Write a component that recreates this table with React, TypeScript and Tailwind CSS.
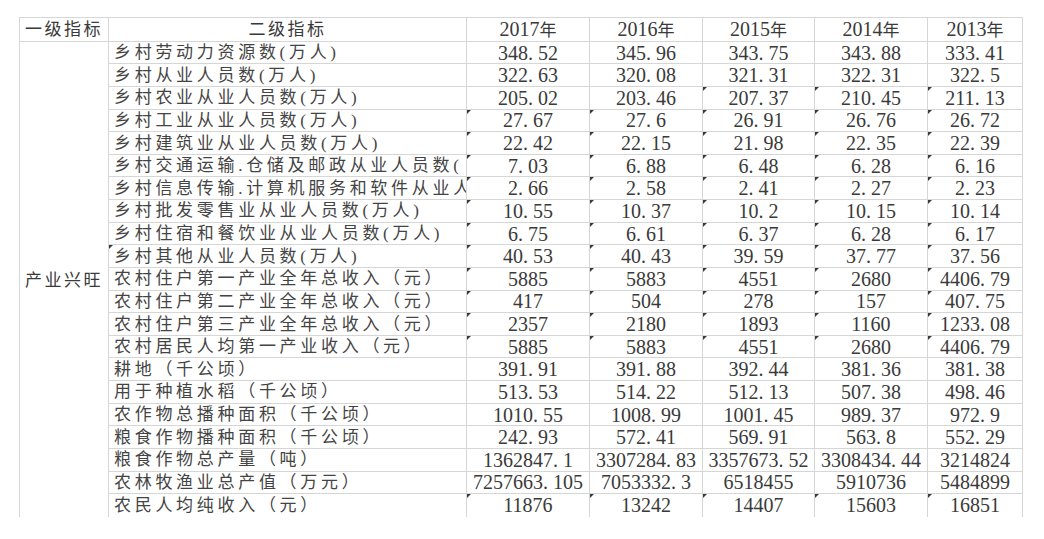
import React from 'react';

type Row = {
  label: string;
  values: string[];
  flags: boolean[]; // little corner marks on the year cells
  labelFlag?: boolean;
};

const ALL = [true, true, true, true, true];
const NONE = [false, false, false, false, false];

const rows: Row[] = [
  { label: '乡村劳动力资源数(万人)', values: ['348.52', '345.96', '343.75', '343.88', '333.41'], flags: NONE },
  { label: '乡村从业人员数(万人)', values: ['322.63', '320.08', '321.31', '322.31', '322.5'], flags: NONE },
  { label: '乡村农业从业人员数(万人)', values: ['205.02', '203.46', '207.37', '210.45', '211.13'], flags: [false, false, true, true, true] },
  { label: '乡村工业从业人员数(万人)', values: ['27.67', '27.6', '26.91', '26.76', '26.72'], flags: ALL },
  { label: '乡村建筑业从业人员数(万人)', values: ['22.42', '22.15', '21.98', '22.35', '22.39'], flags: ALL },
  { label: '乡村交通运输.仓储及邮政从业人员数(', values: ['7.03', '6.88', '6.48', '6.28', '6.16'], flags: ALL },
  { label: '乡村信息传输.计算机服务和软件从业人', values: ['2.66', '2.58', '2.41', '2.27', '2.23'], flags: ALL },
  { label: '乡村批发零售业从业人员数(万人)', values: ['10.55', '10.37', '10.2', '10.15', '10.14'], flags: ALL },
  { label: '乡村住宿和餐饮业从业人员数(万人)', values: ['6.75', '6.61', '6.37', '6.28', '6.17'], flags: ALL },
  { label: '乡村其他从业人员数(万人)', values: ['40.53', '40.43', '39.59', '37.77', '37.56'], flags: ALL, labelFlag: true },
  { label: '农村住户第一产业全年总收入（元）', values: ['5885', '5883', '4551', '2680', '4406.79'], flags: ALL },
  { label: '农村住户第二产业全年总收入（元）', values: ['417', '504', '278', '157', '407.75'], flags: ALL },
  { label: '农村住户第三产业全年总收入（元）', values: ['2357', '2180', '1893', '1160', '1233.08'], flags: ALL },
  { label: '农村居民人均第一产业收入（元）', values: ['5885', '5883', '4551', '2680', '4406.79'], flags: ALL },
  { label: '耕地（千公顷）', values: ['391.91', '391.88', '392.44', '381.36', '381.38'], flags: NONE },
  { label: '用于种植水稻（千公顷）', values: ['513.53', '514.22', '512.13', '507.38', '498.46'], flags: NONE },
  { label: '农作物总播种面积（千公顷）', values: ['1010.55', '1008.99', '1001.45', '989.37', '972.9'], flags: NONE },
  { label: '粮食作物播种面积（千公顷）', values: ['242.93', '572.41', '569.91', '563.8', '552.29'], flags: NONE },
  { label: '粮食作物总产量（吨）', values: ['1362847.1', '3307284.83', '3357673.52', '3308434.44', '3214824'], flags: NONE },
  { label: '农林牧渔业总产值（万元）', values: ['7257663.105', '7053332.3', '6518455', '5910736', '5484899'], flags: NONE },
  { label: '农民人均纯收入（元）', values: ['11876', '13242', '14407', '15603', '16851'], flags: ALL },
];

const years = ['2017', '2016', '2015', '2014', '2013'];

const cjk = "font-['Liberation_Serif','Noto_Sans_CJK_SC',serif]";
const line = 'border border-[#d6d6d6]';

// Excel "number stored as text" corner mark
const Mark = () => (
  <span className="absolute top-0 left-0 w-0 h-0 border-t-[4px] border-r-[4px] border-t-[#3a3a3a] border-r-transparent" />
);

// SimSun-like monospaced dot
const Num = ({ v }: { v: string }) => {
  const [a, b] = v.split('.');
  return (
    <>
      {a}
      {b !== undefined && <span className="inline-block w-[10px] text-left">.</span>}
      {b}
    </>
  );
};

export default function App() {
  return (
    <div className="w-[1044px] h-[539px] bg-white pl-[19px] pt-[17px] overflow-hidden">
      <table className="border-collapse table-fixed w-[1003px] text-[#3a3a3a]">
        <colgroup>
          <col className="w-[89px]" />
          <col className="w-[358px]" />
          <col className="w-[123px]" />
          <col className="w-[113px]" />
          <col className="w-[112px]" />
          <col className="w-[113px]" />
          <col className="w-[95px]" />
        </colgroup>
        <thead>
          <tr className="h-[23.7px]">
            <th className={`${line} ${cjk} font-normal text-[17px] tracking-[2.5px] leading-none text-center p-0 whitespace-nowrap`}>
              一级指标
            </th>
            <th className={`${line} ${cjk} font-normal text-[17px] tracking-[2.5px] leading-none text-center p-0`}>
              二级指标
            </th>
            {years.map((y) => (
              <th key={y} className={`${line} font-normal leading-none text-center p-0 whitespace-nowrap`}>
                <span className="font-['Liberation_Serif',serif] text-[20px]">{y}</span>
                <span className="font-['Noto_Sans_CJK_SC',sans-serif] text-[17px]">年</span>
              </th>
            ))}
          </tr>
        </thead>
        <tbody>
          {rows.map((r, i) => {
            const last = i === rows.length - 1;
            const b = last ? 'border-b-transparent' : '';
            return (
              <tr key={i} className="h-[22.63px]">
                {i === 0 && (
                  <td
                    rowSpan={rows.length}
                    className={`${line} border-b-transparent ${cjk} text-[17px] tracking-[2.5px] text-center align-middle p-0 pt-[4px] whitespace-nowrap`}
                  >
                    产业兴旺
                  </td>
                )}
                <td
                  className={`${line} ${b} relative ${cjk} text-[17px] tracking-[3.7px] text-[#444] leading-none pl-[5px] pr-0 py-0 whitespace-nowrap overflow-hidden`}
                >
                  {r.labelFlag && <Mark />}
                  {r.label}
                </td>
                {r.values.map((v, j) => (
                  <td
                    key={j}
                    className={`${line} ${b} relative font-['Liberation_Serif',serif] text-[20px] leading-none text-center p-0 whitespace-nowrap overflow-hidden`}
                  >
                    {r.flags[j] && <Mark />}
                    <Num v={v} />
                  </td>
                ))}
              </tr>
            );
          })}
        </tbody>
      </table>
    </div>
  );
}
